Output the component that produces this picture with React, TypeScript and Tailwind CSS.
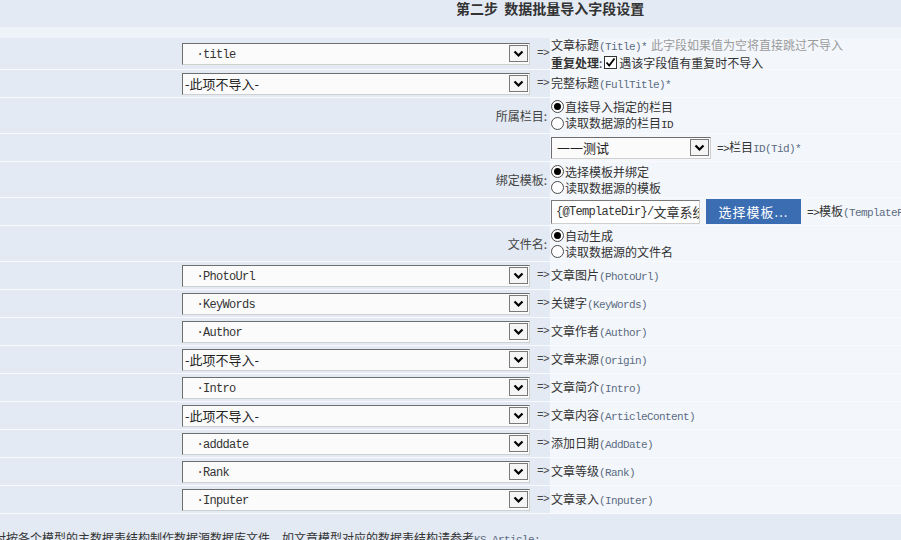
const CN = "font-['Noto_Sans_CJK_SC','Noto_Sans',sans-serif]";
const MONO = "font-['Liberation_Mono',monospace] text-[11px] tracking-[-0.6px]";
const MONO13 = "font-['Liberation_Mono',monospace] text-[12px] tracking-[-0.7px]";

function Arrow() {
  return (
    <span className="mr-px w-[19px] h-[17px] shrink-0 border border-[#7a7a7a] bg-[#f5f5f5] flex items-center justify-center">
      <svg width="11" height="8" viewBox="0 0 11 8">
        <path d="M1.5 1.5 L5.5 5.5 L9.5 1.5" fill="none" stroke="#000" strokeWidth="2.2" />
      </svg>
    </span>
  );
}

function Sel({ w, children }: { w: string; children: React.ReactNode }) {
  return (
    <div
      className={`${w} h-[22px] shrink-0 flex items-center justify-between bg-[#fbfbfb] border border-t-[#6e6e6e] border-l-[#6e6e6e] border-r-[#cfcfcf] border-b-[#cfcfcf]`}
    >
      <span className="pl-[2px] text-[13px] leading-[20px] text-[#222] whitespace-nowrap">{children}</span>
      <Arrow />
    </div>
  );
}

function Radio({ on }: { on?: boolean }) {
  return (
    <span className="inline-flex w-[13px] h-[13px] shrink-0 rounded-full border border-[#4a4a4a] bg-white items-center justify-center align-middle">
      {on && <span className="w-[7px] h-[7px] rounded-full bg-black" />}
    </span>
  );
}

function Check() {
  return (
    <span className="inline-flex w-[13px] h-[13px] border border-[#333] bg-white items-center justify-center mx-[2px]">
      <svg width="11" height="11" viewBox="0 0 11 11">
        <path d="M1.5 5.5 L4.2 8.5 L9.5 1.5" fill="none" stroke="#000" strokeWidth="1.8" />
      </svg>
    </span>
  );
}

function Row({ h, left, right }: { h: string; left: React.ReactNode; right: React.ReactNode }) {
  return (
    <div className={`flex border-b border-[#f8fafd] ${h}`}>
      <div className="w-[550px] shrink-0 bg-[#e3eaf3] flex items-center">{left}</div>
      <div className="flex-1 bg-[#f3f7fc] flex items-center pl-px whitespace-nowrap">{right}</div>
    </div>
  );
}

function SelCell({ v }: { v?: string }) {
  return (
    <div className="flex items-center pl-[182px]">
      <Sel w="w-[348px]">
        {v ? <span className={`${MONO13} text-[#333] pl-[5px]`}>{"\u00a0·" + v}</span> : <span>-此项不导入-</span>}
      </Sel>
      <span className={`${MONO} ml-[7px] text-[#444]`}>=&gt;</span>
    </div>
  );
}

function Label({ t }: { t: string }) {
  return <div className="w-full text-right pr-[3px] text-[12px] text-[#444]">{t}</div>;
}

function Radios({ a, b }: { a: React.ReactNode; b: React.ReactNode }) {
  return (
    <div className="flex flex-col text-[12px] leading-[16px] text-[#333]">
      <div className="flex items-center"><Radio on /><span className="ml-px">{a}</span></div>
      <div className="flex items-center"><Radio /><span className="ml-px">{b}</span></div>
    </div>
  );
}

const fields: [string | undefined, string, string][] = [
  ["PhotoUrl", "文章图片", "(PhotoUrl)"],
  ["KeyWords", "关键字", "(KeyWords)"],
  ["Author", "文章作者", "(Author)"],
  [undefined, "文章来源", "(Origin)"],
  ["Intro", "文章简介", "(Intro)"],
  [undefined, "文章内容", "(ArticleContent)"],
  ["adddate", "添加日期", "(AddDate)"],
  ["Rank", "文章等级", "(Rank)"],
  ["Inputer", "文章录入", "(Inputer)"],
];

export default function App() {
  return (
    <div className={`${CN} w-[901px] h-[540px] overflow-hidden bg-[#e3eaf3] text-[#333]`}>
      <div className="h-[27px] bg-[#e3eaf3] pl-[456px] whitespace-nowrap">
        <span className="text-[14px] leading-[16px] font-bold text-[#333] block">第二步&nbsp;&nbsp;数据批量导入字段设置</span>
      </div>
      <div className="h-[11px] bg-[#eef3fa]" />

      <Row
        h="h-[32px]"
        left={<SelCell v="title" />}
        right={
          <div className="flex flex-col text-[12px] leading-[16px]">
            <div>
              文章标题<span className={`${MONO} text-[#5b6b82]`}>(Title)*</span>
              <span className="ml-[4px] text-[#9a9a9a]">此字段如果值为空将直接跳过不导入</span>
            </div>
            <div className="flex items-center">
              <b className="font-bold">重复处理</b>:<Check />遇该字段值有重复时不导入
            </div>
          </div>
        }
      />
      <Row
        h="h-[28px]"
        left={<SelCell />}
        right={
          <span className="text-[12px]">
            完整标题<span className={`${MONO} text-[#5b6b82]`}>(FullTitle)*</span>
          </span>
        }
      />
      <Row
        h="h-[36px]"
        left={<Label t="所属栏目:" />}
        right={<Radios a="直接导入指定的栏目" b={<>读取数据源的栏目<span className={MONO}>ID</span></>} />}
      />
      <Row
        h="h-[28px]"
        left={null}
        right={
          <div className="flex items-center">
            <Sel w="w-[160px]">
              <span className="pl-[3px]">一一测试</span>
            </Sel>
            <span className="ml-[6px] text-[12px]">
              <span className={MONO}>=&gt;</span>栏目<span className={`${MONO} text-[#5b6b82]`}>ID(Tid)*</span>
            </span>
          </div>
        }
      />
      <Row h="h-[36px]" left={<Label t="绑定模板:" />} right={<Radios a="选择模板并绑定" b="读取数据源的模板" />} />
      <Row
        h="h-[28px]"
        left={null}
        right={
          <div className="flex items-center">
            <div className="w-[149px] h-[24px] shrink-0 overflow-hidden flex items-center bg-white border border-t-[#7a7a7a] border-l-[#7a7a7a] border-r-[#cfcfcf] border-b-[#cfcfcf] pl-[4px] text-[13px] leading-[20px] whitespace-nowrap">
              <span className={`${MONO13} text-[#333]`}>{"{@TemplateDir}/"}</span>文章系统
            </div>
            <button className="ml-[6px] w-[95px] h-[25px] bg-[#3b6db3] text-white text-[13px] tracking-[1px]">
              选择模板...
            </button>
            <span className="ml-[6px] text-[12px]">
              <span className={MONO}>=&gt;</span>模板<span className={`${MONO} text-[#5b6b82]`}>(TemplateFile)</span>
            </span>
          </div>
        }
      />
      <Row h="h-[36px]" left={<Label t="文件名:" />} right={<Radios a="自动生成" b="读取数据源的文件名" />} />
      {fields.map(([v, cn, en], i) => (
        <Row
          key={i}
          h="h-[28px]"
          left={<SelCell v={v} />}
          right={
            <span className="text-[12px]">
              {cn}
              <span className={`${MONO} text-[#5b6b82]`}>{en}</span>
            </span>
          }
        />
      ))}
      <div className="h-[26px] bg-[#e3eaf3] pt-[16px] whitespace-nowrap text-[12px] leading-[16px] ml-[-6px]">
        对按各个模型的主数据表结构制作数据源数据库文件，如文章模型对应的数据表结构请参考
        <span className={`${MONO} text-[#5b6b82]`}>KS_Article:</span>
      </div>
    </div>
  );
}
